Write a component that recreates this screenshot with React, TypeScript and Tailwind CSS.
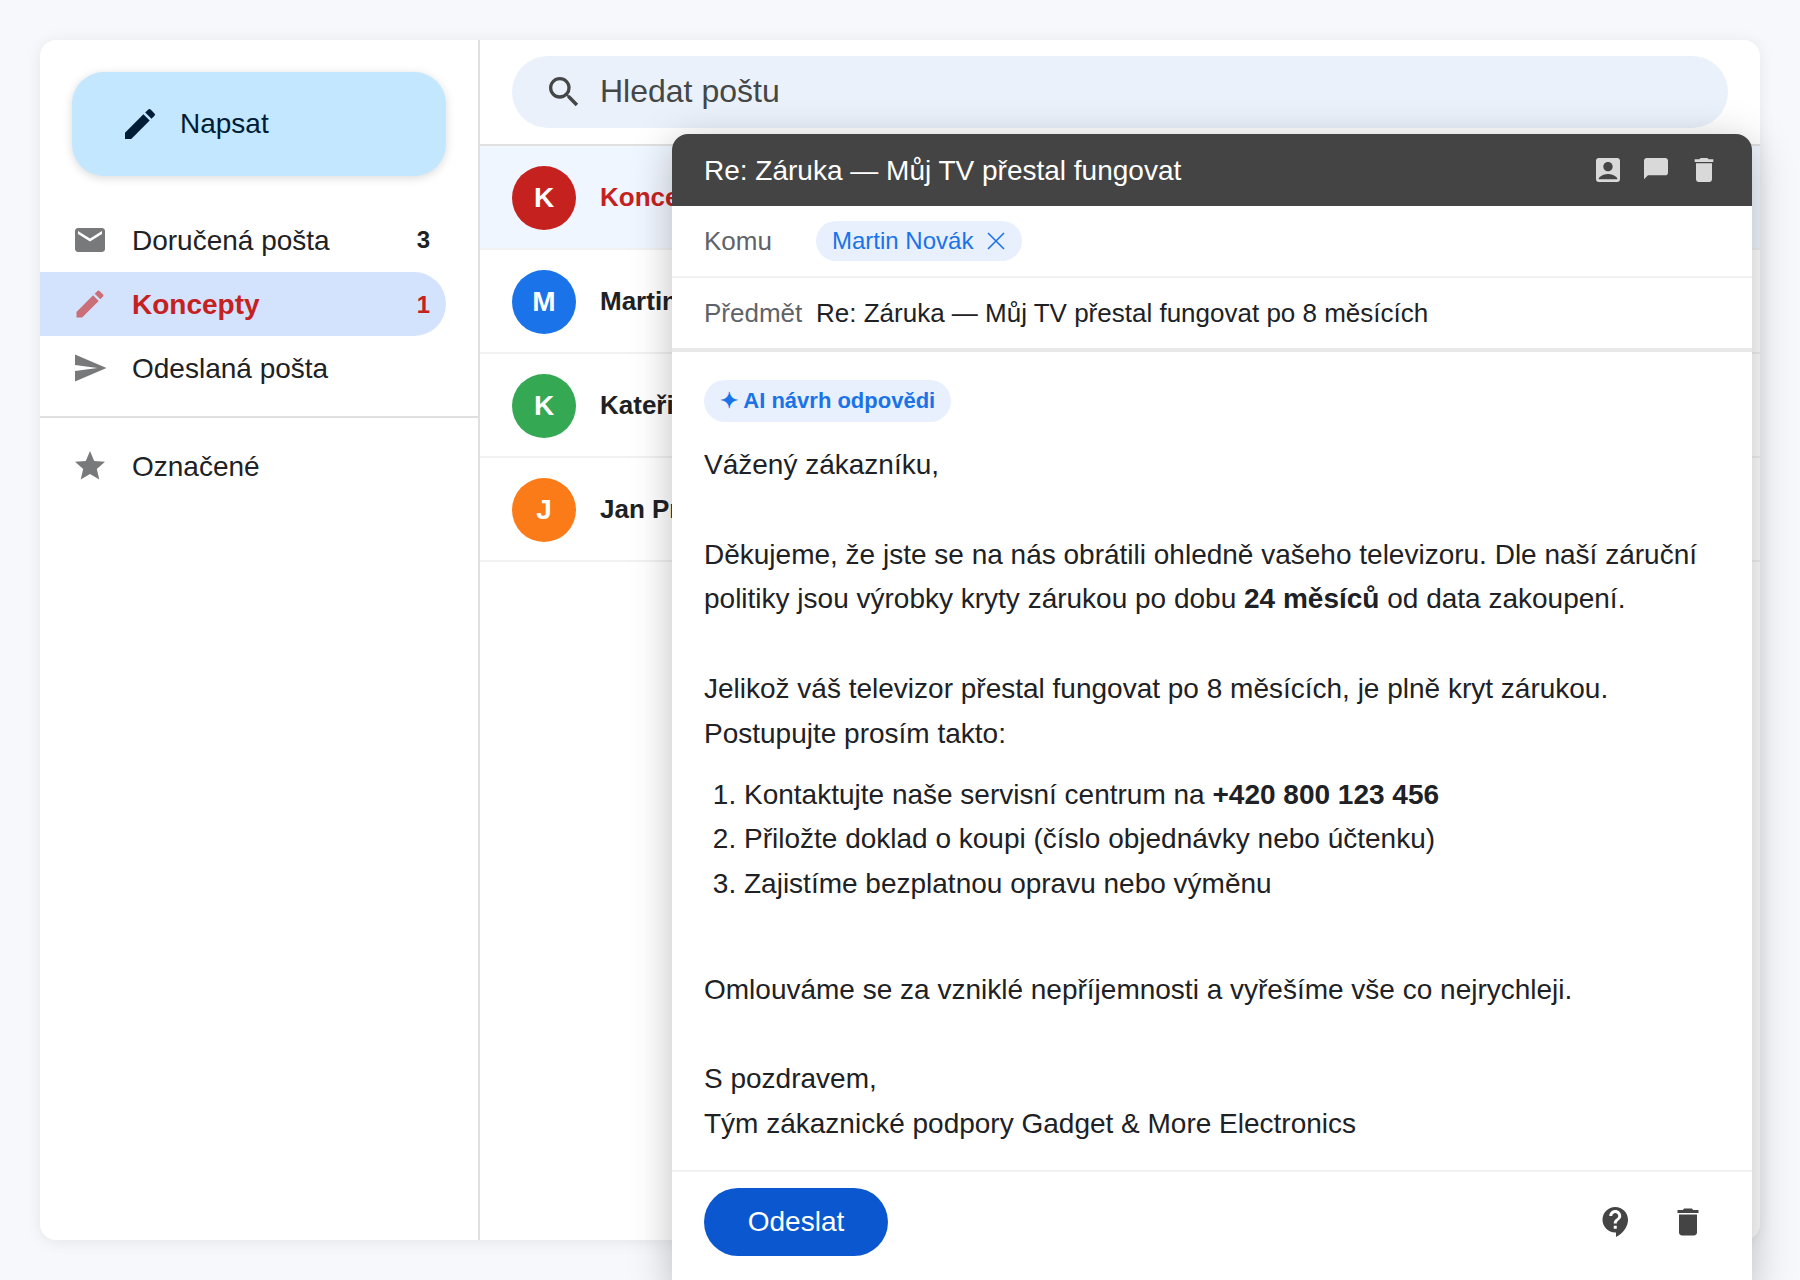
import React from 'react';
import { MdAccountBox, MdContactSupport, MdDelete, MdEdit, MdEmail, MdSearch, MdSend, MdStar } from 'react-icons/md';

const threads = [
  { id: 1, initial: 'K', name: 'Koncept', avatar: 'bg-[#c5221f]', active: true },
  { id: 2, initial: 'M', name: 'Martin Novák', avatar: 'bg-[#1a73e8]', active: false },
  { id: 3, initial: 'K', name: 'Kateřina Svobodová', avatar: 'bg-[#34a853]', active: false },
  { id: 4, initial: 'J', name: 'Jan Procházka', avatar: 'bg-[#fa7b17]', active: false },
];

const App = () => {
  return (
    <div className="h-[1280px] overflow-hidden bg-[#f6f8fc] p-10 font-['Liberation_Sans',Arial,sans-serif] text-[#202124]">
      <div className="relative flex h-[1200px] rounded-2xl bg-white shadow-[0_2px_16px_rgba(0,0,0,0.08)]">
        {/* Sidebar */}
        <aside className="w-[440px] shrink-0 border-r-2 border-[#e0e0e0] pt-8">
          <button className="ml-8 flex h-[104px] w-[374px] items-center gap-5 rounded-[32px] bg-[#c2e7ff] pl-12 text-[28px] text-[#001d35] shadow-[0_2px_10px_rgba(0,0,0,0.15)]">
            <MdEdit size={40} />
            Napsat
          </button>

          <nav className="mt-8">
            <div className="flex h-16 w-[406px] items-center gap-6 pl-8 pr-4 text-[28px]">
              <MdEmail size={36} className="opacity-60" />
              <span className="flex-1 pt-[2px]">Doručená pošta</span>
              <span className="text-2xl font-bold">3</span>
            </div>
            <div className="flex h-16 w-[406px] items-center gap-6 rounded-r-[32px] bg-[#d3e3fd] pl-8 pr-4 text-[28px] font-bold text-[#c5221f]">
              <MdEdit size={36} className="opacity-60" />
              <span className="flex-1 pt-[2px]">Koncepty</span>
              <span className="pt-[2px] text-2xl">1</span>
            </div>
            <div className="flex h-16 w-[406px] items-center gap-6 pl-8 pr-4 text-[28px]">
              <MdSend size={36} className="opacity-60" />
              <span className="flex-1 pt-[2px]">Odeslaná pošta</span>
            </div>
            <div className="my-4 border-t-2 border-[#e0e0e0]" />
            <div className="flex h-16 w-[406px] items-center gap-6 pl-8 pr-4 text-[28px]">
              <MdStar size={36} className="opacity-60" />
              <span className="flex-1 pt-[2px]">Označené</span>
            </div>
          </nav>
        </aside>

        {/* Thread list */}
        <main className="min-w-0 flex-1">
          <div className="border-b-2 border-[#e0e0e0] px-8 py-4">
            <div className="flex h-[72px] items-center gap-4 rounded-[36px] bg-[#eaf1fb] pl-8 text-[32px] text-[#444746]">
              <MdSearch size={40} />
              <span className="mb-[2px]">Hledat poštu</span>
            </div>
          </div>
          {threads.map((thread) => (
            <div
              key={thread.id}
              className={`flex h-[104px] items-center gap-6 border-b-2 border-[#f1f1f1] px-8 ${thread.active ? 'bg-[#f0f6ff]' : ''}`}
            >
              <div className={`mt-[2px] flex h-16 w-16 items-center justify-center rounded-full text-[28px] font-bold text-white ${thread.avatar}`}>
                {thread.initial}
              </div>
              <span className={`text-[26px] font-bold ${thread.active ? 'text-[#c5221f]' : ''}`}>{thread.name}</span>
            </div>
          ))}
        </main>

        {/* Compose window */}
        <section className="absolute left-[632px] right-2 top-[94px] flex flex-col rounded-t-2xl bg-white shadow-[0_8px_40px_rgba(0,0,0,0.25)]">
          <header className="flex h-[72px] items-center justify-between rounded-t-2xl bg-[#444444] px-8 text-white">
            <span className="pt-[2px] text-[28px]">Re: Záruka — Můj TV přestal fungovat</span>
            <div className="flex gap-4 opacity-80">
              <MdAccountBox size={32} />
              <svg width="32" height="32" viewBox="0 0 24 24" fill="currentColor">
                <path d="M5 3h14c1.1 0 2 .9 2 2v9c0 1.1-.9 2-2 2H6l-3 3V5c0-1.1.9-2 2-2z" />
              </svg>
              <MdDelete size={32} />
            </div>
          </header>

          <div className="flex h-[72px] items-center border-b-2 border-[#f1f1f1] px-8 text-[26px]">
            <span className="w-[112px] text-[#5f6368]">Komu</span>
            <span className="flex h-10 items-center gap-3 rounded-full bg-[#e8f0fe] pl-4 pr-[15px] text-2xl text-[#1a73e8]">
              Martin Novák
              <svg width="22" height="22" viewBox="0 0 22 22" stroke="currentColor" strokeWidth="1.6" fill="none">
                <path d="M3 3l16 16M19 3L3 19" />
              </svg>
            </span>
          </div>
          <div className="flex h-[74px] items-center border-b-4 border-[#e8e8e8] px-8 text-[26px]">
            <span className="w-[112px] text-[#5f6368]">Předmět</span>
            <span>Re: Záruka — Můj TV přestal fungovat po 8 měsících</span>
          </div>

          <div className="px-8 pb-[23px] pt-[25px] text-[28px] leading-[44.8px]">
            <div className="mb-[21px] inline-flex h-[42px] items-center rounded-full bg-[#e8f0fe] px-4 text-[22px] font-bold leading-none text-[#1a73e8]">
              ✦ AI návrh odpovědi
            </div>
            <p>
              Vážený zákazníku,
              <br />
              <br />
              Děkujeme, že jste se na nás obrátili ohledně vašeho televizoru. Dle naší záruční politiky jsou výrobky kryty
              zárukou po dobu <b>24 měsíců</b> od data zakoupení.
              <br />
              <br />
              Jelikož váš televizor přestal fungovat po 8 měsících, je plně kryt zárukou. Postupujte prosím takto:
            </p>
            <ol className="my-4 list-decimal pl-10">
              <li>
                Kontaktujte naše servisní centrum na <b>+420 800 123 456</b>
              </li>
              <li>Přiložte doklad o koupi (číslo objednávky nebo účtenku)</li>
              <li>Zajistíme bezplatnou opravu nebo výměnu</li>
            </ol>
            <p>
              <br />
              Omlouváme se za vzniklé nepříjemnosti a vyřešíme vše co nejrychleji.
              <br />
              <br />
              S pozdravem,
              <br />
              Tým zákaznické podpory Gadget &amp; More Electronics
            </p>
          </div>

          <footer className="flex items-center justify-between border-t-2 border-[#f1f1f1] pb-8 pl-8 pr-[46px] pt-4">
            <button className="h-[68px] w-[184px] rounded-full bg-[#0b57d0] text-[28px] text-white">Odeslat</button>
            <div className="flex gap-[36px] text-[#444444]">
              <MdContactSupport size={36} />
              <MdDelete size={36} />
            </div>
          </footer>
        </section>
      </div>
    </div>
  );
};

export default App;
